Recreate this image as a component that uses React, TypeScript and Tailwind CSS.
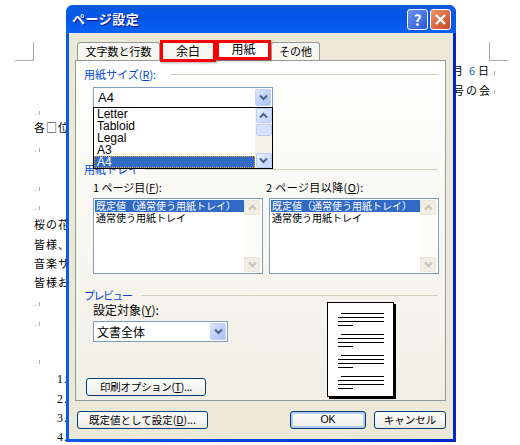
import { ReactNode } from 'react'

const jp = "font-['Noto_Sans_CJK_JP','Noto_Sans',sans-serif]"

function U({ children }: { children: ReactNode }) {
  return <span className="underline underline-offset-1">{children}</span>
}

function Chevron({ color = '#4d6185' }: { color?: string }) {
  return (
    <svg width="9" height="7" viewBox="0 0 9 7">
      <path d="M1 1.5 L4.5 5 L8 1.5" fill="none" stroke={color} strokeWidth="2" />
    </svg>
  )
}

function ComboArrow() {
  return (
    <div className="flex h-[17px] w-4 items-center justify-center rounded-[2px] border border-[#c3d3fd] bg-gradient-to-br from-[#dbe5fe] to-[#a6c0f5]">
      <Chevron />
    </div>
  )
}

function ScrollBtn({ up, disabled }: { up?: boolean; disabled?: boolean }) {
  return (
    <div
      className={`flex h-[15px] w-4 shrink-0 items-center justify-center rounded-[2px] border ${
        disabled ? 'border-[#e8e6da] bg-[#f1efe5]' : 'border-[#bccdf5] bg-gradient-to-br from-[#e6eefe] to-[#c3d4fb]'
      }`}
    >
      <svg width="9" height="7" viewBox="0 0 9 7" className={up ? 'rotate-180' : ''}>
        <path d="M1 1.5 L4.5 5 L8 1.5" fill="none" stroke={disabled ? '#c4c2b4' : '#4d6185'} strokeWidth="2" />
      </svg>
    </div>
  )
}

function GroupHead({ title, className = '' }: { title: ReactNode; className?: string }) {
  return (
    <div className={`flex h-[14px] items-center pr-[7px] ${className}`}>
      <span className="text-[11px] leading-[14px] text-[#0046d5]">{title}</span>
      <div className="h-px flex-1 bg-[#d0d0bf]" />
    </div>
  )
}

function TrayList() {
  return (
    <div className="flex h-[76px] w-[170px] border border-[#7f9db9] bg-white p-px">
      <div className="min-w-0 flex-1 text-[10px] leading-[12px] text-black">
        <div className="h-3 whitespace-nowrap bg-[#316ac5] pl-px text-white">既定値（通常使う用紙トレイ）</div>
        <div className="h-3 whitespace-nowrap pl-px">通常使う用紙トレイ</div>
      </div>
      <div className="flex w-[17px] shrink-0 flex-col justify-between bg-[#fbfbf8]">
        <ScrollBtn up disabled />
        <ScrollBtn disabled />
      </div>
    </div>
  )
}

function XpButton({ children, className = '' }: { children: ReactNode; className?: string }) {
  return (
    <div
      className={`flex h-[18px] items-center justify-center rounded-[3px] border border-[#003c74] bg-gradient-to-b from-white to-[#ecebe5] text-[10.5px] text-black ${className}`}
    >
      {children}
    </div>
  )
}

function PageLines() {
  return (
    <div className="flex flex-col items-end gap-[3px]">
      <div className="h-px w-[43px] bg-black" />
      <div className="h-px w-[46px] bg-black" />
      <div className="h-px w-[46px] bg-black" />
      <div className="mr-[31px] h-px w-[15px] bg-black" />
    </div>
  )
}

function DocText({ className, children }: { className: string; children: ReactNode }) {
  return <div className={`absolute whitespace-nowrap text-[11px] leading-[14px] tracking-[1px] text-black ${className}`}>{children}</div>
}

// paragraph mark of the word processor, left behind in the document
function ReturnMark({ className }: { className: string }) {
  return (
    <svg width="6" height="5" viewBox="0 0 6 5" className={`absolute ${className}`}>
      <rect x="0" y="3" width="1" height="1" fill="#b0b0b0" />
      <rect x="4" y="0" width="1" height="4" fill="#b0b0b0" />
    </svg>
  )
}

export default function App() {
  return (
    <div className={`relative h-[445px] w-[520px] overflow-hidden bg-white ${jp}`}>
      {/* document behind the dialog */}
      <div className="absolute left-[15px] top-[42px] h-[19px] w-[19px] border-b border-r border-[#a8a8a8]" />
      <div className="absolute left-[489px] top-[42px] h-[19px] w-[19px] border-b border-l border-[#a8a8a8]" />
      <ReturnMark className="left-[35px] top-[111px]" />
      <ReturnMark className="left-[35px] top-[148px]" />
      <ReturnMark className="left-[35px] top-[187px]" />
      <ReturnMark className="left-[35px] top-[206px]" />
      <ReturnMark className="left-[35px] top-[302px]" />
      <ReturnMark className="left-[35px] top-[322px]" />
      <ReturnMark className="left-[35px] top-[360px]" />
      <ReturnMark className="left-[490px] top-[71px]" />
      <ReturnMark className="left-[490px] top-[90px]" />
      <DocText className="left-[34px] top-[120px]">各□位</DocText>
      <DocText className="left-[34px] top-[217px]">桜の花</DocText>
      <DocText className="left-[34px] top-[237px]">皆様、</DocText>
      <DocText className="left-[34px] top-[256px]">音楽サ</DocText>
      <DocText className="left-[34px] top-[275px]">皆様お</DocText>
      <DocText className="left-[57px] top-[372px] font-['Liberation_Serif',serif] text-[12px]">1.</DocText>
      <DocText className="left-[57px] top-[392px] font-['Liberation_Serif',serif] text-[12px]">2.</DocText>
      <DocText className="left-[57px] top-[411px] font-['Liberation_Serif',serif] text-[12px]">3.</DocText>
      <DocText className="left-[57px] top-[430px] font-['Liberation_Serif',serif] text-[12px]">4.</DocText>
      <div className="absolute left-[452px] top-[63px] flex gap-[6px] whitespace-nowrap text-[11px] leading-[14px] text-black">
        <span>月</span>
        <span className="text-[#1d5fb0]">6</span>
        <span className="-ml-[3px]">日</span>
      </div>
      <DocText className="left-[453px] top-[83px] tracking-[2px]">号の会</DocText>

      {/* dialog window */}
      <div className="absolute left-[66px] top-[5px] flex h-[437px] w-[390px] flex-col rounded-t-[7px] bg-gradient-to-r from-[#0a5aec] to-[#0428c8] px-[3px] pb-[3px]">
        <div className="-mx-[3px] flex h-[28px] shrink-0 items-center justify-between rounded-t-[7px] bg-gradient-to-b from-[#0a5ae0] via-[#0556e8] to-[#0a62f4] pl-[6px] pr-[5px]">
          <span className="text-[13px] font-bold tracking-[0.5px] text-white [text-shadow:1px_1px_0_#0f1089]">ページ設定</span>
          <div className="flex gap-[2px]">
            <div className="flex h-[21px] w-[21px] items-center justify-center rounded-[3px] border border-white bg-gradient-to-br from-[#6d94f0] to-[#2a55d8] text-[15px] font-bold leading-none text-white">
              ?
            </div>
            <div className="flex h-[21px] w-[21px] items-center justify-center rounded-[3px] border border-white bg-gradient-to-br from-[#e8926c] to-[#c9431c]">
              <svg width="13" height="13" viewBox="0 0 13 13">
                <path d="M2 2 L11 11 M11 2 L2 11" stroke="#fff" strokeWidth="2.4" />
              </svg>
            </div>
          </div>
        </div>

        <div className="flex flex-1 flex-col bg-[#ece9d8] pl-[6px] pt-[8px]">
          {/* tabs */}
          <div className="relative z-10 flex h-[19px] items-end pl-[2px] text-[11px] text-black">
            <div className="flex h-[18px] w-[83px] items-center justify-center rounded-t-[3px] border border-b-0 border-[#919b9c] bg-[#f7f6f0]">文字数と行数</div>
            <div className="-mb-[2px] flex h-[22px] w-[56px] items-center justify-center bg-[#f7f6f0] text-[12px] shadow-[inset_0_0_0_3px_#f00,1px_1px_2px_#0005]">余白</div>
            <div className="flex h-[20px] w-[55px] items-center justify-center bg-white pb-[2px] text-[12px] shadow-[inset_0_0_0_3px_#f00,1px_1px_2px_#0005]">用紙</div>
            <div className="flex h-[18px] w-[49px] items-center justify-center rounded-t-[3px] border border-b-0 border-[#919b9c] bg-[#f7f6f0]">その他</div>
          </div>

          {/* tab page */}
          <div className="relative flex h-[341px] w-[371px] flex-col border border-[#919b9c] bg-gradient-to-b from-white to-[#f1efe5] pl-[8px] text-[12px] text-black">
            <GroupHead title={<>用紙サイズ(<U>R</U>):</>} className="mt-[6px] gap-[15px]" />

            <div className="relative ml-[9px] mt-[6px]">
              <div className="flex h-[21px] w-[180px] items-center justify-between border border-[#7f9db9] bg-white pl-1 pr-px font-['Liberation_Sans',sans-serif] text-[13px]">
                A4
                <ComboArrow />
              </div>
              {/* open dropdown */}
              <div className="absolute left-0 top-[20px] z-10 flex h-[62px] w-[180px] border border-black bg-white font-['Liberation_Sans',sans-serif] text-[12px] leading-[12px]">
                <div className="min-w-0 flex-1">
                  <div className="h-3 pl-[3px]">Letter</div>
                  <div className="h-3 pl-[3px]">Tabloid</div>
                  <div className="h-3 pl-[3px]">Legal</div>
                  <div className="h-3 pl-[3px]">A3</div>
                  <div className="h-3 border border-dotted border-[#e0a030] bg-[#316ac5] pl-[2px] leading-[10px] text-white">A4</div>
                </div>
                <div className="flex w-[17px] shrink-0 flex-col items-center bg-[#f4f2e8]">
                  <ScrollBtn up />
                  <div className="mt-px h-3 w-4 rounded-[2px] border border-[#bccdf5] bg-[#d5e0fb]" />
                  <div className="flex-1" />
                  <ScrollBtn />
                </div>
              </div>
            </div>

            <GroupHead title="用紙トレイ" className="mt-[54px] gap-1.5" />

            <div className="ml-[9px] mt-[4px] flex gap-[6px]">
              <div className="flex w-[170px] flex-col gap-[4px]">
                <div className="h-[14px] text-[11px] leading-[14px]">1 ページ目(<U>F</U>):</div>
                <TrayList />
              </div>
              <div className="flex w-[170px] flex-col gap-[4px]">
                <div className="-ml-[3px] h-[14px] whitespace-nowrap text-[11px] leading-[14px] tracking-[0.4px]">2 ページ目以降(<U>O</U>):</div>
                <TrayList />
              </div>
            </div>

            <GroupHead title={<span className="tracking-[-1.5px]">プレビュー</span>} className="mt-[14px] gap-[9px]" />

            <div className="flex flex-1 justify-between pr-[51px]">
              <div className="flex flex-col">
                <div className="ml-[9px] mt-[1px] h-[14px] leading-[14px]">設定対象(<U>Y</U>):</div>
                <div className="ml-[9px] mt-[4px] flex h-[21px] w-[135px] items-center justify-between border border-[#7f9db9] bg-white pl-[3px] pr-px">
                  文書全体
                  <ComboArrow />
                </div>
                <XpButton className="ml-[2px] mt-[36px] w-[120px] tracking-[-0.3px]">
                  印刷オプション(<U>T</U>)...
                </XpButton>
              </div>
              <div className="flex h-[95px] w-[67px] flex-col gap-[8px] border border-black bg-white pl-[10px] pr-[9px] pt-[10px] shadow-[2px_2px_0_#000]">
                <PageLines />
                <PageLines />
                <PageLines />
                <PageLines />
              </div>
            </div>
          </div>

          {/* bottom buttons */}
          <div className="flex items-center pl-[2px] pt-[10px]">
            <XpButton className="w-[131px]">
              既定値として設定(<U>D</U>)...
            </XpButton>
            <XpButton className="ml-[82px] w-[76px] font-['Liberation_Sans',sans-serif] shadow-[inset_0_0_0_2px_#b4c8f0]">OK</XpButton>
            <XpButton className="ml-[8px] w-[72px]">キャンセル</XpButton>
          </div>
        </div>
      </div>
    </div>
  )
}
